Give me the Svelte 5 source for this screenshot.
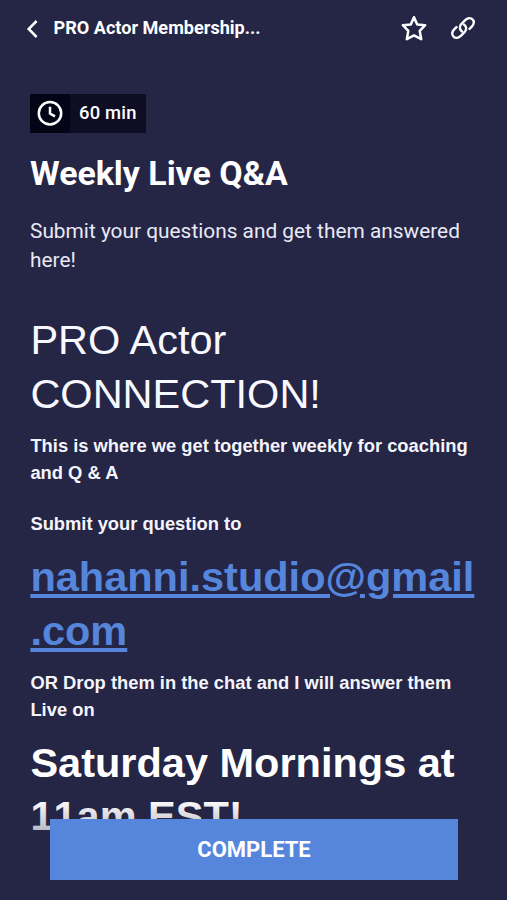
<script lang="ts">
  let starred = $state(false);
  let completed = $state(false);

  const courseName = 'PRO Actor Membership...';
  const email = ['nahanni.studio@gmail', '.com'];
</script>

<div class="screen">
  <header class="top-bar">
    <button class="icon-button back" type="button" aria-label="Back">
      <svg width="12" height="20" viewBox="0 0 12 20" fill="none">
        <path d="M10.6 2 2.7 10l7.9 8" stroke="currentColor" stroke-width="2.5" />
      </svg>
    </button>
    <span class="course-name">{courseName}</span>
    <button
      class="icon-button star"
      type="button"
      aria-label="Favorite"
      onclick={() => (starred = !starred)}
    >
      <svg width="28" height="28" viewBox="0 0 28 28" fill={starred ? 'currentColor' : 'none'}>
        <path
          d="M14 3.2 17.2 10.5 25.2 11.2 19.7 16.9 21.2 25.2 14 21.4 6.8 25.2 8.3 16.9 2.8 11.2 10.8 10.5Z"
          stroke="currentColor"
          stroke-width="2.5"
          stroke-linejoin="round"
        />
      </svg>
    </button>
    <button class="icon-button" type="button" aria-label="Copy link">
      <svg width="26" height="26" viewBox="0 0 26 26" fill="none">
        <g stroke="currentColor" stroke-width="2.4" stroke-linecap="round">
          <path d="M12.1 16.4C9.6 14.8 9 11.4 11.2 9.2L15.2 5.2C17.4 3 20.400 2.400 22.500 4.400s1.500 5-.7 7.200L19.500 13.900" />
          <path d="M13.900 9.600c2.500 1.600 3.100 5 .9 7.200L10.800 20.800c-2.200 2.200-5.200 2.800-7.300.8s-1.500-5 .7-7.200L6.500 12.100" />
        </g>
      </svg>
    </button>
  </header>

  <main class="lesson">
    <div class="duration">
      <span class="duration-icon">
        <svg width="26" height="26" viewBox="0 0 26 26" fill="none" stroke="currentColor">
          <circle cx="13" cy="13.3" r="11.2" stroke-width="2.5" />
          <path d="M13 6.7v6.9l5 2.7" stroke-width="2.5" />
        </svg>
      </span>
      <span class="duration-text">60 min</span>
    </div>

    <h1>Weekly Live Q&amp;A</h1>
    <p class="summary">Submit your questions and get them answered<br />here!</p>

    <section class="content">
      <h2 class="light">PRO Actor<br />CONNECTION!</h2>
      <p>This is where we get together weekly for coaching<br />and Q &amp; A</p>
      <p class="spaced">Submit your question to</p>
      <h2><a href="mailto:{email.join('')}">{email[0]}<br />{email[1]}</a></h2>
      <p class="after-link">OR Drop them in the chat and I will answer them<br />Live on</p>
      <h2 class="schedule">Saturday Mornings at<br />11am EST!</h2>
    </section>
  </main>

  <!-- Stays over the lesson text and fades it out -->
  <footer class="action-bar">
    <button class="complete" type="button" onclick={() => (completed = !completed)}>
      COMPLETE
    </button>
  </footer>
</div>

<style>
  :global(body) {
    background: #252545;
  }

  .screen {
    position: relative;
    box-sizing: border-box;
    height: 900px;
    overflow: hidden;
    background: #252545;
    color: #fff;
    font-family: Roboto, sans-serif;
  }

  .top-bar {
    display: flex;
    align-items: center;
    box-sizing: border-box;
    height: 56px;
    padding: 0 31px 0 26px;
  }

  .icon-button {
    display: flex;
    padding: 0;
    border: 0;
    background: none;
    color: #fff;
    cursor: pointer;
  }

  .back {
    margin-right: 15.5px;
    padding-top: 2px;
  }

  .course-name {
    flex: 1;
    font-size: 18.1px;
    font-weight: 700;
    line-height: 24px;
    white-space: nowrap;
  }

  .star {
    margin-right: 22px;
  }

  .lesson {
    padding: 38px 30px 0;
  }

  .duration {
    display: flex;
    width: 116px;
    height: 38.5px;
    background: #0e0d24;
  }

  .duration-icon {
    display: flex;
    align-items: center;
    justify-content: center;
    width: 40px;
    background: #040417;
  }

  .duration-text {
    padding-left: 9px;
    font-size: 18.4px;
    font-weight: 500;
    line-height: 38px;
    letter-spacing: 0.2px;
    white-space: nowrap;
  }

  h1 {
    margin: 21px 0 0;
    font-size: 33.9px;
    font-weight: 700;
    line-height: 40px;
    white-space: nowrap;
  }

  .summary {
    margin: 23px 0 0;
    color: #e9e9f5;
    font-size: 20.85px;
    line-height: 29.2px;
    white-space: nowrap;
  }

  .content {
    margin-top: 38px;
    padding-left: 0.4px;
    font-family: 'Liberation Sans', Arial, sans-serif;
    white-space: nowrap;
  }

  .content h2 {
    margin: 0;
    font-size: 41.5px;
    font-weight: 700;
    line-height: 53.7px;
  }

  .content .light {
    color: #f8f8ff;
    font-weight: 400;
  }

  .content .schedule {
    font-kerning: none;
  }

  .content p {
    margin: 12px 0;
    color: #f4f4fc;
    font-size: 18.35px;
    font-weight: 700;
    line-height: 27px;
  }

  .content .spaced {
    margin: 24px 0 13px;
  }

  .content .after-link {
    margin: 11px 0 13px;
  }

  .content a {
    color: #5586dc;
    text-decoration: underline;
  }

  .action-bar {
    position: absolute;
    right: 0;
    bottom: 0;
    left: 0;
    display: flex;
    padding: 20px 49px 20px 50px;
    background: linear-gradient(rgba(37, 37, 69, 0), #252545 100px);
  }

  .complete {
    flex: 1;
    height: 61px;
    padding: 0;
    border: 0;
    background: #5586dc;
    color: #fff;
    font-family: inherit;
    font-size: 22px;
    font-weight: 700;
    cursor: pointer;
  }
</style>
